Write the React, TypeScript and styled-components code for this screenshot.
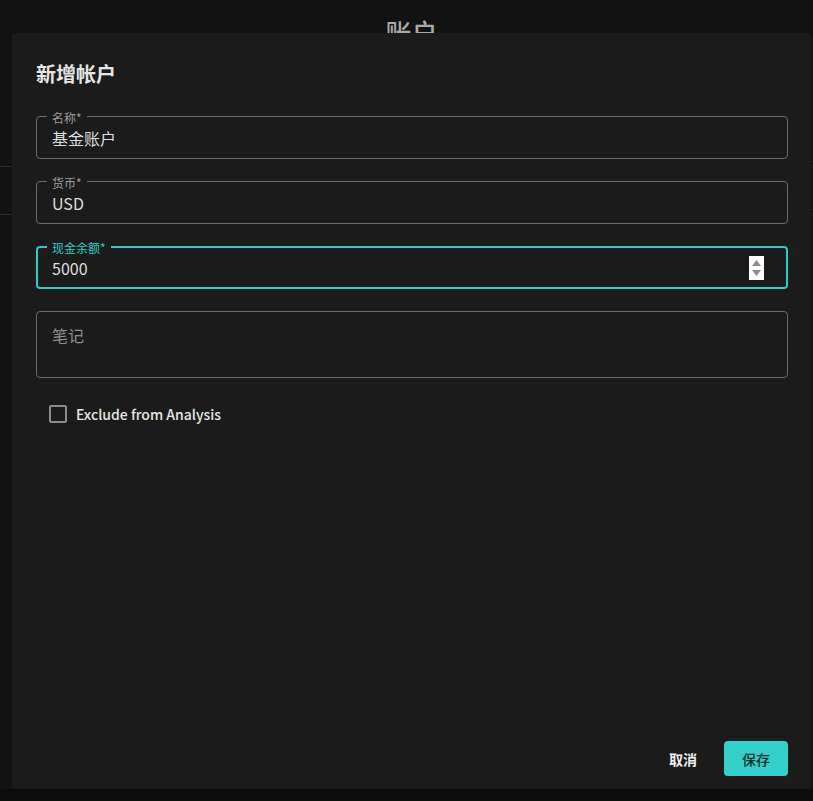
import React from "react";
import styled, { createGlobalStyle } from "styled-components";

const FONT = `"Noto Sans CJK SC", "Noto Sans", sans-serif`;

const Global = createGlobalStyle`
  html, body { margin: 0; padding: 0; background: #0c0c0c; }
  body { font-family: ${FONT}; }
  * { box-sizing: border-box; }
`;

const Stage = styled.div`
  position: relative;
  width: 813px;
  height: 801px;
  overflow: hidden;
  background: #0c0c0c;
`;

const Page = styled.div`
  height: 789px;
  background: #121212;
  display: flex;
  flex-direction: column;
`;

const PageTitle = styled.div`
  text-align: center;
  padding-left: 10px;
  padding-top: 14px;
  font-size: 26px;
  font-weight: 500;
  color: #a9a9a9;
  line-height: 36px;
  height: 166px;
`;

const PageRow = styled.div`
  height: 48px;
  border-top: 1px solid #2b2b2b;
`;

const Dialog = styled.div`
  position: absolute;
  left: 12px;
  top: 33px;
  width: 799px;
  height: 756px;
  background: #1b1b1b;
  border-radius: 4px;
  display: flex;
  flex-direction: column;
`;

const Content = styled.div`
  flex: 1;
  padding: 25px 23px 0 24px;
  display: flex;
  flex-direction: column;
`;

const Title = styled.h2`
  margin: 0;
  font-size: 20px;
  font-weight: 700;
  line-height: 32px;
  color: #e6e6e6;
  height: 32px;
`;

const Fields = styled.div`
  margin-top: 26px;
  display: flex;
  flex-direction: column;
  gap: 22px;
`;

const Field = styled.div<{ $focused?: boolean; $tall?: boolean }>`
  position: relative;
  height: ${(p) => (p.$tall ? "67px" : "43px")};
  border: ${(p) => (p.$focused ? "2px solid #2ecac6" : "1px solid #6a6a6a")};
  border-radius: 4px;
  padding: ${(p) => (p.$focused ? "0 14px" : "0 15px")};
  display: flex;
  align-items: ${(p) => (p.$tall ? "flex-start" : "center")};
  padding-top: ${(p) => (p.$tall ? "12px" : "0")};
`;

const Label = styled.span<{ $focused?: boolean }>`
  position: absolute;
  left: ${(p) => (p.$focused ? "9px" : "10px")};
  top: ${(p) => (p.$focused ? "-8px" : "-7px")};
  padding: 0 5px;
  background: linear-gradient(#1b1b1b 0 50%, transparent 50% 100%);
  font-size: 12px;
  line-height: 16px;
  color: ${(p) => (p.$focused ? "#2ecac6" : "#9c9c9c")};
`;

const Value = styled.span`
  font-size: 16px;
  line-height: 22px;
  color: #dedede;
  margin-top: 1px;
`;

const Placeholder = styled.span`
  font-size: 16px;
  line-height: 22px;
  color: #8e8e8e;
`;

const Spinner = styled.span`
  position: absolute;
  right: 22px;
  top: 8px;
  width: 15px;
  height: 24px;
  background: #ffffff;
  display: flex;
  flex-direction: column;
  align-items: center;
  justify-content: center;
  gap: 4px;
`;

const CheckRow = styled.label`
  margin-top: 26px;
  margin-left: 13px;
  display: flex;
  align-items: center;
  gap: 9px;
  font-size: 14px;
  font-weight: 500;
  color: #e6e6e6;
`;

const Box = styled.span`
  width: 18px;
  height: 18px;
  border: 2px solid #8c8c8c;
  border-radius: 2px;
`;

const Footer = styled.div`
  display: flex;
  justify-content: flex-end;
  align-items: center;
  gap: 9px;
  padding: 0 23px 13px 0;
`;

const Button = styled.button<{ $primary?: boolean }>`
  width: 64px;
  height: 35px;
  border: none;
  border-radius: 4px;
  font-family: ${FONT};
  font-size: 14px;
  font-weight: ${(p) => (p.$primary ? 500 : 700)};
  background: ${(p) => (p.$primary ? "#33cfc9" : "transparent")};
  color: ${(p) => (p.$primary ? "#14302f" : "#f0f0f0")};
  cursor: pointer;
`;

export default function App() {
  return (
    <Stage>
      <Global />
      <Page>
        <PageTitle>账户</PageTitle>
        <PageRow />
        <PageRow />
      </Page>
      <Dialog>
        <Content>
          <Title>新增帐户</Title>
          <Fields>
            <Field>
              <Label>名称*</Label>
              <Value>基金账户</Value>
            </Field>
            <Field>
              <Label>货币*</Label>
              <Value>USD</Value>
            </Field>
            <Field $focused>
              <Label $focused>现金余额*</Label>
              <Value>5000</Value>
              <Spinner>
                <svg width="9" height="6" viewBox="0 0 9 6">
                  <path d="M4.5 0 L9 6 L0 6 Z" fill="#8a8a8a" />
                </svg>
                <svg width="9" height="6" viewBox="0 0 9 6">
                  <path d="M0 0 L9 0 L4.5 6 Z" fill="#8a8a8a" />
                </svg>
              </Spinner>
            </Field>
            <Field $tall>
              <Placeholder>笔记</Placeholder>
            </Field>
          </Fields>
          <CheckRow>
            <Box />
            Exclude from Analysis
          </CheckRow>
        </Content>
        <Footer>
          <Button>取消</Button>
          <Button $primary>保存</Button>
        </Footer>
      </Dialog>
    </Stage>
  );
}
